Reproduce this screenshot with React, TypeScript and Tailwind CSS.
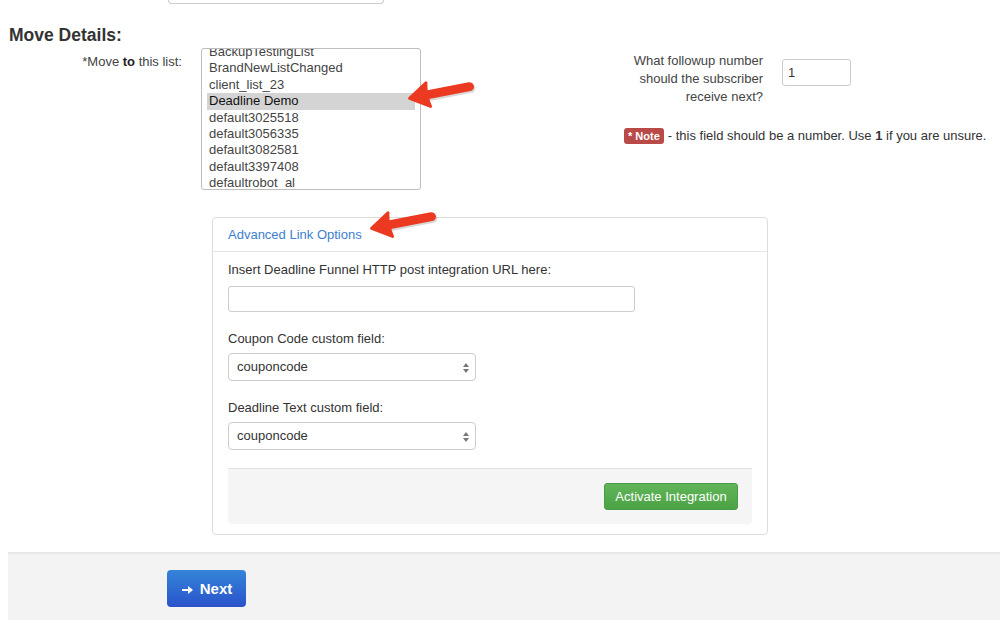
import React from 'react';

const listItems = [
    'BackupTestingList',
    'BrandNewListChanged',
    'client_list_23',
    'Deadline Demo',
    'default3025518',
    'default3056335',
    'default3082581',
    'default3397408',
    'defaultrobot_al',
    'defaultrobot_b',
];

function RedArrow({ className }: { className: string }) {
    return (
        <svg className={className} width="72" height="32" viewBox="0 0 72 32">
            <g transform="rotate(-11 36 16)">
                <line x1="20" y1="18" x2="65" y2="18" stroke="rgba(0,0,0,0.15)" strokeWidth="9" strokeLinecap="round" />
                <line x1="18" y1="16" x2="64" y2="16" stroke="#ec3a22" strokeWidth="9" strokeLinecap="round" />
                <path d="M3 16 L22 4 Q19 16 22 28 Z" fill="#ec3a22" stroke="#ec3a22" strokeWidth="3" strokeLinejoin="round" />
            </g>
        </svg>
    );
}

function SelectBox({ value }: { value: string }) {
    return (
        <div className="relative flex items-center w-[248px] h-[28px] border border-[#cccccc] rounded-[4px] bg-white pl-[8px] text-[13px] text-[#333]">
            {value}
            <svg className="absolute right-[6px] top-[9px]" width="6" height="10" viewBox="0 0 6 10">
                <path d="M0 4 L3 0 L6 4 Z" fill="#777" />
                <path d="M0 6 L3 10 L6 6 Z" fill="#777" />
            </svg>
        </div>
    );
}

export default function App() {
    return (
        <div className="w-[1000px] h-[620px] overflow-hidden bg-white text-[13px] text-[#333] relative" style={{ fontFamily: '"Liberation Sans", Arial, sans-serif' }}>
            {/* bottom of the field above */}
            <div className="ml-[168px] w-[216px] h-[4px] border-x border-b border-[#cccccc] rounded-b-[4px]" />

            <div className="pl-[9px]">
                <h2 className="mt-[20px] text-[17.5px] leading-[22px] font-bold text-[#333]">Move Details:</h2>

                <div className="flex mt-[2px] relative">
                    <div className="w-[173px] text-right pt-[6px] leading-[16px] text-[#444]">
                        *Move <b className="text-[#222]">to</b> this list:
                    </div>
                    <div className="ml-[19px] w-[220px] h-[142px] border border-[#bdbdbd] rounded-[3px] overflow-hidden bg-white">
                        <div className="-mt-[5px] px-[5px] text-[13px] text-[#444]">
                            {listItems.map((item) => (
                                <div
                                    key={item}
                                    className={item === 'Deadline Demo'
                                        ? 'h-[16.4px] leading-[16.4px] px-[2px] bg-[#d4d4d4] text-[#111]'
                                        : 'h-[16.4px] leading-[16.4px] px-[2px]'}
                                >
                                    {item}
                                </div>
                            ))}
                        </div>
                    </div>

                    <div className="ml-[192px] flex flex-col">
                        <div className="flex">
                            <div className="w-[150px] text-right leading-[18px] pt-[4px] text-[#444]">
                                What followup number should the subscriber receive next?
                            </div>
                            <div className="ml-[19px] mt-[11px] w-[69px] h-[27px] border border-[#cccccc] rounded-[3px] pl-[5px] flex items-center text-[13px] text-[#333]">
                                1
                            </div>
                        </div>
                        <div className="ml-[11px] mt-[20px] flex items-center whitespace-nowrap">
                            <span className="bg-[#b94a48] text-white font-bold text-[11px] leading-[16px] px-[4px] rounded-[3px]">* Note</span>
                            <span className="ml-[4px] text-[#333]">- this field should be a number. Use <b>1</b> if you are unsure.</span>
                        </div>
                    </div>

                    <RedArrow className="absolute left-[397px] top-[28px]" />
                </div>

                <div className="relative ml-[203px] mt-[27px] w-[556px] border border-[#dddddd] rounded-[4px] bg-white">
                    <div className="h-[34px] border-b border-[#e5e5e5] px-[15px] flex items-center text-[#3d80cf]">
                        Advanced Link Options
                    </div>
                    <RedArrow className="absolute left-[155px] -top-[12px]" />
                    <div className="px-[15px] pt-[9px] pb-[10px]">
                        <div className="leading-[18px]">Insert Deadline Funnel HTTP post integration URL here:</div>
                        <div className="mt-[7px] w-[407px] h-[26px] border border-[#cccccc] rounded-[3px]" />

                        <div className="mt-[18px] leading-[18px]">Coupon Code custom field:</div>
                        <div className="mt-[5px]"><SelectBox value="couponcode" /></div>

                        <div className="mt-[18px] leading-[18px]">Deadline Text custom field:</div>
                        <div className="mt-[5px]"><SelectBox value="couponcode" /></div>

                        <div className="mt-[18px] h-[56px] border-t border-[#e2e2e2] bg-[#f5f5f5] rounded-b-[4px] flex items-center justify-end pr-[14px]">
                            <button className="h-[27px] w-[134px] rounded-[3px] border border-[#4a9b45] bg-gradient-to-b from-[#62b55a] to-[#4aa243] text-white text-[13px]">
                                Activate Integration
                            </button>
                        </div>
                    </div>
                </div>
            </div>

            <div className="ml-[8px] mt-[17px] h-[80px] border-t-2 border-[#e8e8e8] bg-[#f3f3f3] pl-[159px] pt-[16px]">
                <button className="w-[79px] h-[37px] pt-[2px] rounded-[4px] bg-gradient-to-b from-[#3584d8] to-[#2b52cb] text-white text-[15px] font-bold flex items-center justify-center gap-[6px]">
                    <svg width="13" height="10" viewBox="0 0 13 10">
                        <path d="M1 5 H9" stroke="white" strokeWidth="2" />
                        <path d="M7 1 L12 5 L7 9 Z" fill="white" />
                    </svg>
                    Next
                </button>
            </div>
        </div>
    );
}
